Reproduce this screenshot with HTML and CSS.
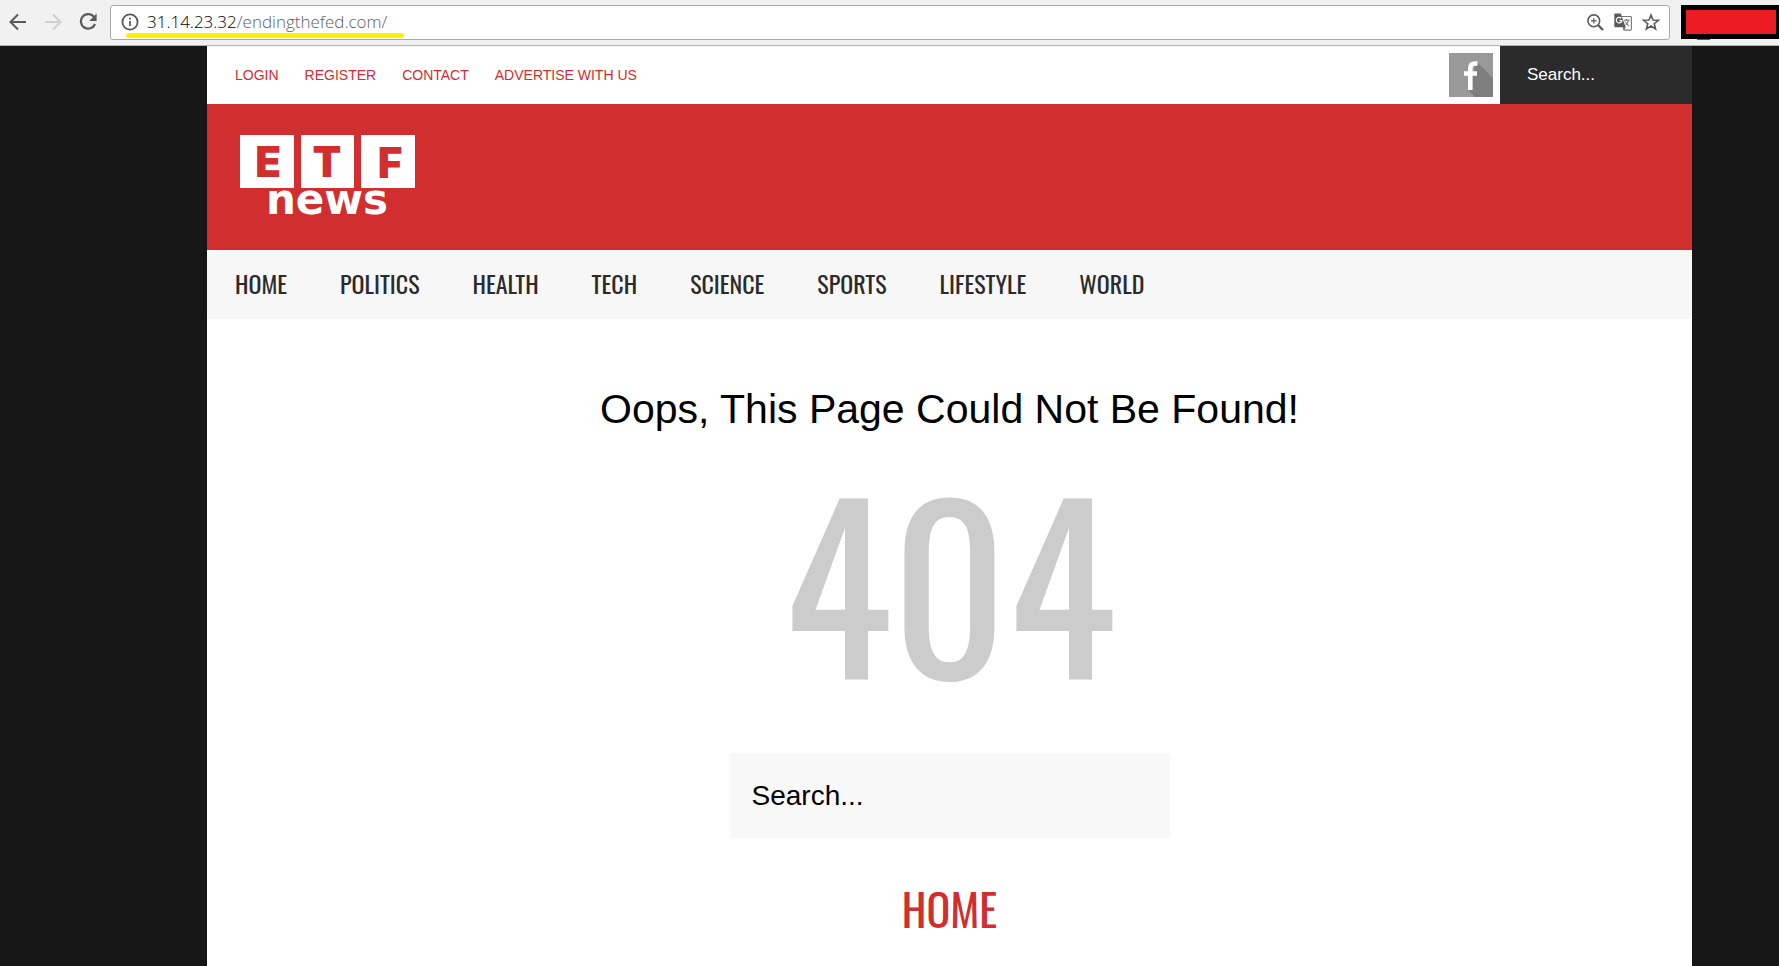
FILE: index.html
```html
<!DOCTYPE html>
<html lang="en">
<head>
  <meta charset="UTF-8" />
  <meta name="viewport" content="width=device-width, initial-scale=1.0"/>
  <title>ETF News - Page Not Found</title>
  <link rel="stylesheet" href="styles.css">
</head>
<body>

  <div class="browser-bar">
    <div class="nav-buttons">
      <button aria-label="Back">
        <svg width="18" height="18" viewBox="0 0 18 18"><path d="M17 9H2M9 1.5L1.5 9L9 16.5" fill="none" stroke="#5a5a5a" stroke-width="2"/></svg>
      </button>
      <button aria-label="Forward">
        <svg width="18" height="18" viewBox="0 0 18 18"><path d="M1 9H16M9 1.5L16.5 9L9 16.5" fill="none" stroke="#d0d0d0" stroke-width="2"/></svg>
      </button>
      <button aria-label="Reload">
        <svg width="18" height="18" viewBox="0 0 18 18"><path d="M15.2 4.2A7.3 7.3 0 1 0 16 11" fill="none" stroke="#5a5a5a" stroke-width="2.2"/><path d="M17.6 0.5V8H10.2Z" fill="#5a5a5a"/></svg>
      </button>
    </div>

    <div class="address">
      <svg width="18" height="18" viewBox="0 0 18 18"><circle cx="9" cy="9" r="7.6" fill="none" stroke="#5a5a5a" stroke-width="1.8"/><path d="M9 8V13M9 4.8V6.6" stroke="#5a5a5a" stroke-width="1.8"/></svg>
      <div class="url"><span class="host">31.14.23.32</span>/endingthefed.com/</div>
      <div class="address-icons">
        <button aria-label="Zoom">
          <svg width="18" height="18" viewBox="0 0 18 18"><circle cx="7.8" cy="7.8" r="5.9" fill="none" stroke="#5a5a5a" stroke-width="1.6"/><path d="M12 12L17 17" stroke="#5a5a5a" stroke-width="2.4"/><path d="M5 7.8H10.6M7.8 5V10.6" stroke="#5a5a5a" stroke-width="1.2"/></svg>
        </button>
        <button aria-label="Translate">
          <svg width="18" height="18" viewBox="0 0 18 18"><path d="M8 3.5H16.5Q17.4 3.5 17.4 4.4V16.2Q17.4 17.1 16.5 17.1H9.5" fill="#fff" stroke="#777" stroke-width="1.1"/><path d="M1.4 0.5H6.8L11.6 14.3H1.4Q0.3 14.3 0.3 13.2V1.6Q0.3 0.5 1.4 0.5Z" fill="#5a5a5a"/><path d="M8.6 14.3H11.8L9.8 17.2Z" fill="#5a5a5a"/><path d="M7.3 5.4A2.8 2.8 0 1 0 7.9 7.6H5.4" fill="none" stroke="#fff" stroke-width="1.2"/><path d="M10 7.2H15.6M12.7 6V7.2M14.6 7.4Q13.6 11 11.2 12.6M11.2 8.6Q12.6 11.6 15.2 13.2" fill="none" stroke="#666" stroke-width="1"/></svg>
        </button>
        <button aria-label="Bookmark">
          <svg width="18" height="18" viewBox="0 0 18 18"><path d="M9 2L11 7L16.4 7.3L12.2 10.7L13.6 16L9 13L4.4 16L5.8 10.7L1.6 7.3L7 7Z" fill="none" stroke="#5a5a5a" stroke-width="1.6"/></svg>
        </button>
      </div>
      <div class="underline"></div>
    </div>

    <div class="redacted"></div>
  </div>

  <div class="page">
    <div class="top-bar">
      <nav class="top-links">
        <a href="#">LOGIN</a>
        <a href="#">REGISTER</a>
        <a href="#">CONTACT</a>
        <a href="#">ADVERTISE WITH US</a>
      </nav>
      <a class="facebook" href="#" aria-label="Facebook">
        <svg width="44" height="44" viewBox="0 0 44 44"><rect width="44" height="44" fill="#999"/><path d="M28 9L44 25V44H26L19 37Z" fill="#7e7e7e"/><path d="M28.5 10.5H26Q21.3 10.5 21.3 15.5V37M15 20.5H28" fill="none" stroke="#fff" stroke-width="4.6"/></svg>
      </a>
      <input class="top-search" type="text" placeholder="Search..." aria-label="Search the site" />
    </div>

    <header class="header">
      <a href="#" aria-label="ETF News">
        <svg class="logo" width="176" height="100" viewBox="0 0 176 100">
          <rect x="0" y="0" width="54" height="53"/>
          <rect x="61" y="0" width="53" height="53"/>
          <rect x="121" y="0" width="54" height="53"/>
          <text class="logo-letter" x="28" y="42">E</text>
          <text class="logo-letter" x="87" y="42">T</text>
          <text class="logo-letter" x="150" y="43">F</text>
          <text class="logo-news" x="87" y="79">news</text>
        </svg>
      </a>
    </header>

    <nav class="main-nav">
      <a href="#">HOME</a>
      <a href="#">POLITICS</a>
      <a href="#">HEALTH</a>
      <a href="#">TECH</a>
      <a href="#">SCIENCE</a>
      <a href="#">SPORTS</a>
      <a href="#">LIFESTYLE</a>
      <a href="#">WORLD</a>
    </nav>

    <main class="not-found">
      <h1>Oops, This Page Could Not Be Found!</h1>
      <div class="code">404</div>
      <input class="big-search" type="text" placeholder="Search..." aria-label="Search" />
      <a class="home-link" href="#">HOME</a>
    </main>
  </div>

</body>
</html>
```
FILE: styles.css
```css
* {
  box-sizing: border-box;
}

body {
  font-family: "Liberation Sans", Arial, sans-serif;
  background: #171717;
  margin: 0;
  min-height: 100vh;
  display: flex;
  flex-direction: column;
}

a {
  text-decoration: none;
}

button {
  background: none;
  border: none;
  padding: 0;
  cursor: pointer;
}

svg {
  display: block;
}

/* browser toolbar */
.browser-bar {
  display: flex;
  align-items: center;
  height: 46px;
  padding: 0 0 1px 9px;
  background: #f1f1f1;
  border-bottom: 1px solid #b0b0b0;
}

.nav-buttons {
  display: flex;
  gap: 17px;
  margin-right: 13px;
}

.address {
  position: relative;
  flex: 1;
  display: flex;
  align-items: center;
  height: 35px;
  margin-right: 11px;
  padding: 0 9px 0 10px;
  background: #fff;
  border: 1px solid #a9a9a9;
  border-radius: 3px;
}

.url {
  flex: 1;
  margin-left: 8px;
  font-family: "Open Sans", sans-serif;
  font-size: 17px;
  font-weight: 300;
  line-height: 24px;
  color: #606060;
}

.host {
  color: #000;
}

.address-icons {
  display: flex;
  gap: 10px;
}

.underline {
  position: absolute;
  left: 15px;
  bottom: 1px;
  width: 278px;
  height: 5px;
  border-radius: 3px;
  background: #fff200;
}

.redacted {
  position: relative;
  width: 98px;
  height: 34px;
  background: #ed1c24;
  border: 5px solid #000;
  border-right-width: 3px;
}

.redacted::after {
  content: "";
  position: absolute;
  left: 11px;
  bottom: -6px;
  width: 13px;
  height: 1px;
  background: #5a5a5a;
}

/* site */
.page {
  flex: 1;
  margin: 0 87px 0 207px;
  background: #fff;
}

.top-bar {
  display: flex;
  align-items: center;
  height: 58px;
}

.top-links {
  flex: 1;
  display: flex;
  gap: 26px;
  padding-left: 28px;
}

.top-links a {
  font-size: 14px;
  color: #d02e2f;
}

.facebook {
  margin-right: 7px;
}

.top-search {
  width: 192px;
  height: 58px;
  padding: 0 27px;
  border: none;
  background: #2b2b2b;
  color: #fff;
  font-family: inherit;
  font-size: 17px;
}

input::placeholder {
  color: inherit;
  opacity: 1;
}

.header {
  height: 146px;
  padding: 31px 33px 0;
  background: #d02e2f;
}

.logo {
  fill: #fff;
}

.logo-letter {
  font-family: "Inter", sans-serif;
  font-size: 42px;
  font-weight: 900;
  text-anchor: middle;
  fill: #d02e2f;
}

.logo-news {
  font-family: "DejaVu Sans", sans-serif;
  font-size: 42px;
  font-weight: bold;
  text-anchor: middle;
}

.main-nav {
  display: flex;
  align-items: center;
  gap: 53px;
  height: 69px;
  padding: 0 28px 4px;
  background: #f7f7f7;
}

.main-nav a {
  font-family: "Oswald", "Liberation Sans Narrow", sans-serif;
  font-size: 24px;
  color: #2b2b2b;
}

.not-found {
  display: flex;
  flex-direction: column;
  align-items: center;
  padding-top: 66px;
}

h1 {
  margin: 0;
  font-size: 41px;
  font-weight: normal;
  line-height: 48px;
}

.code {
  margin-top: 26px;
  font-family: "Oswald", "Liberation Sans Narrow", sans-serif;
  font-size: 224px;
  line-height: 240px;
  color: #ccc;
}

.big-search {
  width: 440px;
  height: 85px;
  margin-top: 54px;
  padding: 0 22px;
  border: none;
  background: #f8f8f8;
  color: #000;
  font-family: inherit;
  font-size: 28px;
}

.home-link {
  margin-top: 47px;
  font-family: "Oswald", "Liberation Sans Narrow", sans-serif;
  font-size: 44px;
  line-height: 48px;
  color: #d02e2f;
}
```
